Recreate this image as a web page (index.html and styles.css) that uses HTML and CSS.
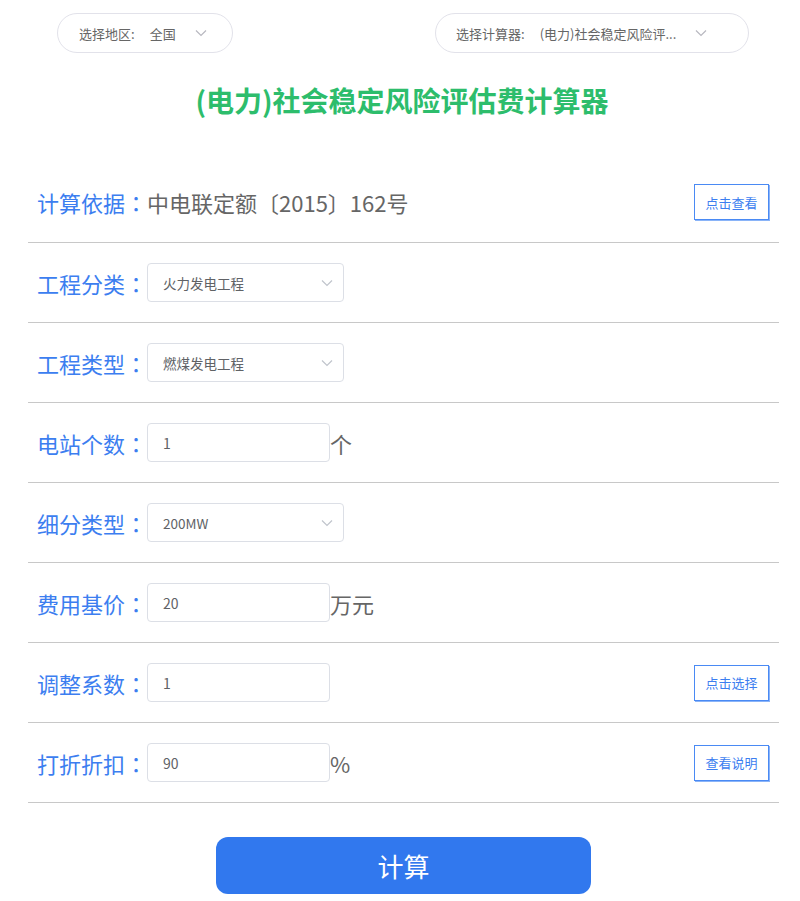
FILE: index.html
```html
<!DOCTYPE html>
<html lang="zh">
<head>
<meta charset="utf-8">
<link rel="stylesheet" href="styles.css">
</head>
<body>
<div class="page">
  <div class="topbar">
    <div class="pill pill-left">
      <span class="pill-label">选择地区:</span>
      <span class="pill-value">全国</span>
      <svg class="chev" viewBox="0 0 12 8" width="12" height="8"><path d="M1 1.5 L6 6.5 L11 1.5" fill="none" stroke="#b8b8c0" stroke-width="1.2"/></svg>
    </div>
    <div class="pill pill-right">
      <span class="pill-label">选择计算器:</span>
      <span class="pill-value">(电力)社会稳定风险评...</span>
      <svg class="chev" viewBox="0 0 12 8" width="12" height="8"><path d="M1 1.5 L6 6.5 L11 1.5" fill="none" stroke="#b8b8c0" stroke-width="1.2"/></svg>
    </div>
  </div>
  <h1 class="title">(电力)社会稳定风险评估费计算器</h1>
  <div class="form">
    <div class="row">
      <span class="label">计算依据<span class="colon" lang="zh-TW">：</span></span>
      <span class="basis">中电联定额〔2015〕162号</span>
      <span class="spacer"></span>
      <button class="side-btn">点击查看</button>
    </div>
    <div class="row">
      <span class="label">工程分类<span class="colon" lang="zh-TW">：</span></span>
      <div class="select"><span>火力发电工程</span><svg class="chev" viewBox="0 0 12 8" width="12" height="8"><path d="M1 1.5 L6 6.5 L11 1.5" fill="none" stroke="#c0c4cc" stroke-width="1.2"/></svg></div>
    </div>
    <div class="row">
      <span class="label">工程类型<span class="colon" lang="zh-TW">：</span></span>
      <div class="select"><span>燃煤发电工程</span><svg class="chev" viewBox="0 0 12 8" width="12" height="8"><path d="M1 1.5 L6 6.5 L11 1.5" fill="none" stroke="#c0c4cc" stroke-width="1.2"/></svg></div>
    </div>
    <div class="row">
      <span class="label">电站个数<span class="colon" lang="zh-TW">：</span></span>
      <div class="input"><span>1</span></div>
      <span class="unit">个</span>
    </div>
    <div class="row">
      <span class="label">细分类型<span class="colon" lang="zh-TW">：</span></span>
      <div class="select"><span>200MW</span><svg class="chev" viewBox="0 0 12 8" width="12" height="8"><path d="M1 1.5 L6 6.5 L11 1.5" fill="none" stroke="#c0c4cc" stroke-width="1.2"/></svg></div>
    </div>
    <div class="row">
      <span class="label">费用基价<span class="colon" lang="zh-TW">：</span></span>
      <div class="input"><span>20</span></div>
      <span class="unit">万元</span>
    </div>
    <div class="row">
      <span class="label">调整系数<span class="colon" lang="zh-TW">：</span></span>
      <div class="input"><span>1</span></div>
      <span class="spacer"></span>
      <button class="side-btn">点击选择</button>
    </div>
    <div class="row">
      <span class="label">打折折扣<span class="colon" lang="zh-TW">：</span></span>
      <div class="input"><span>90</span></div>
      <span class="unit">%</span>
      <span class="spacer"></span>
      <button class="side-btn">查看说明</button>
    </div>
  </div>
  <div class="actions">
    <button class="calc-btn">计算</button>
  </div>
</div>
</body>
</html>
```

FILE: styles.css
```css
* { box-sizing: border-box; }
html, body { margin: 0; padding: 0; background: #fff; }
body {
  font-family: "Noto Sans CJK SC", "Noto Sans", sans-serif;
  color: #666;
}
.page { width: 800px; }
.topbar {
  display: flex;
  padding: 13px 0 0 57px;
}
.pill {
  height: 40px;
  border: 1px solid #e2e2ea;
  border-radius: 20px;
  display: flex;
  align-items: center;
  font-size: 13px;
  color: #666;
}
.pill-left { width: 176px; padding-left: 21px; }
.pill-right { width: 314px; padding-left: 20px; margin-left: 202px; }
.pill-label { margin-right: 15px; }
.pill-left .pill-value { margin-right: 19px; }
.pill-right .pill-value { margin-right: 19px; }
.title {
  margin: 0;
  padding-top: 27px;
  height: 109px;
  text-align: center;
  font-size: 28px;
  font-weight: bold;
  line-height: 40px;
  color: #2dbd6c;
  padding-left: 4px;
}
.form {
  margin-left: 28px;
  width: 751px;
}
.row {
  height: 80px;
  border-bottom: 1px solid #c8c8c8;
  display: flex;
  align-items: center;
  padding-left: 9px;
  padding-right: 10px;
}
.row:first-child { height: 81px; }
.label {
  width: 110px;
  flex-shrink: 0;
  font-size: 22px;
  color: #3c7ef0;
  white-space: nowrap;
}
.colon {
  font-family: "Noto Sans CJK TC", "Noto Sans CJK SC", sans-serif;
}
.basis {
  font-size: 22px;
  color: #666;
}
.spacer { flex: 1; }
.select {
  width: 197px;
  height: 39px;
  border: 1px solid #dcdfe6;
  border-radius: 4px;
  display: flex;
  align-items: center;
  justify-content: space-between;
  padding: 0 10px 0 15px;
  font-size: 13.5px;
  color: #606266;
}
.input {
  width: 183px;
  height: 39px;
  border: 1px solid #dcdfe6;
  border-radius: 4px;
  display: flex;
  align-items: center;
  padding-left: 15px;
  font-size: 14px;
  color: #606266;
}
.unit {
  font-size: 22px;
  color: #666;
}
.side-btn {
  width: 75px;
  height: 36px;
  border: 1px solid #4a8af4;
  box-shadow: 1px 1px 0 #8ab4f8;
  background: #fff;
  color: #3c7ef0;
  font-family: "Noto Sans CJK SC", sans-serif;
  font-size: 13px;
  padding: 0;
}
.actions {
  display: flex;
  justify-content: center;
  padding-top: 34px;
  padding-left: 7px;
}
.calc-btn {
  width: 375px;
  height: 57px;
  border: none;
  border-radius: 12px;
  background: #3178ee;
  color: #fff;
  font-family: "Noto Sans CJK SC", sans-serif;
  font-size: 26px;
  padding: 0;
}
```
